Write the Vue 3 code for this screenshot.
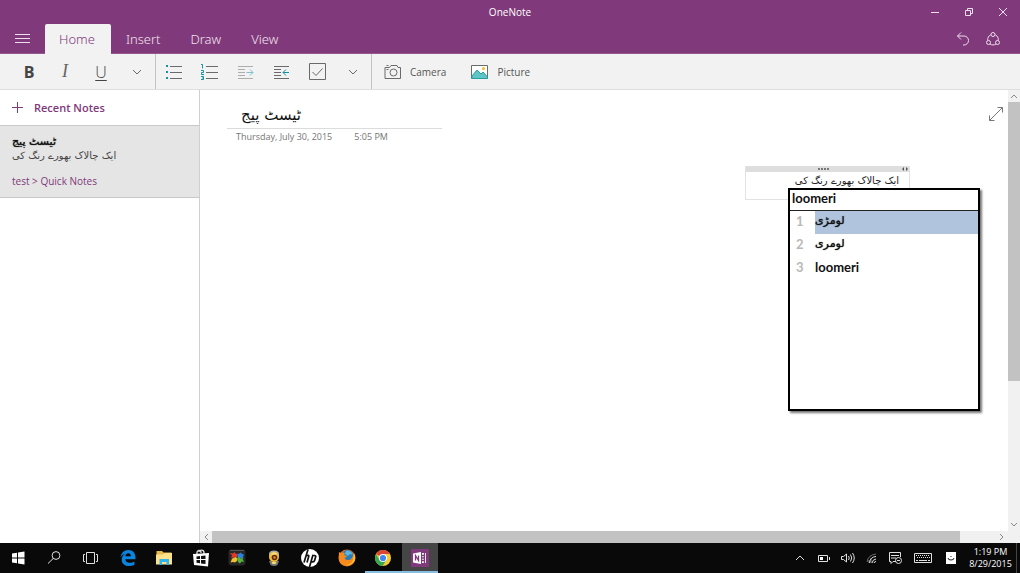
<script setup>
import { ref } from 'vue'

const tabs = ['Home', 'Insert', 'Draw', 'View']
const activeTab = ref('Home')
const candidates = ['لومڑی', 'لومری', 'loomeri']
const selected = ref(0)
const typed = ref('loomeri')
const title = ref('ٹیسٹ پیج')
</script>

<template>
  <div class="app">
    <header class="head">
      <div class="titlebar">
        <span class="app-name">OneNote</span>
        <div class="window-buttons">
          <button aria-label="Minimize"><svg width="10" height="10" viewBox="0 0 10 10"><path d="M1 5.5h8" /></svg></button>
          <button aria-label="Restore"><svg width="10" height="10" viewBox="0 0 10 10"><path d="M1.5 3.5h5v5h-5zM3.5 3.500v-2h5v5h-2" /></svg></button>
          <button aria-label="Close"><svg width="10" height="10" viewBox="0 0 10 10"><path d="M1 1l8 8M9 1l-8 8" /></svg></button>
        </div>
      </div>
      <div class="tabbar">
        <button class="menu" aria-label="Menu"><svg width="16" height="12" viewBox="0 0 16 12"><path d="M0 1.500h15M0 5.500h15M0 9.500h15" /></svg></button>
        <nav class="tabs">
          <button v-for="t in tabs" :key="t" class="tab" :class="{ active: t === activeTab }" @click="activeTab = t">{{ t }}</button>
        </nav>
        <div class="head-actions">
          <button aria-label="Undo"><svg width="16" height="16" viewBox="0 0 16 16"><path d="M6 1.500L2.500 5 6 8.500M2.500 5H9a4.500 4.500 0 0 1 0 9H8" /></svg></button>
          <button aria-label="Share"><svg width="16" height="16" viewBox="0 0 16 16"><circle cx="8" cy="3.500" r="2" /><circle cx="3.500" cy="11.500" r="2" /><circle cx="12.500" cy="11.500" r="2" /><path d="M5.800 3.800C3.500 4.800 2.400 7 2.800 9.400M10.200 3.800c2.300 1 3.400 3.200 3 5.600M5 13c1.800 1.300 4.200 1.300 6 0" /></svg></button>
        </div>
      </div>
    </header>

    <div class="toolbar">
      <div class="group first">
        <button class="tool bold" aria-label="Bold">B</button>
        <button class="tool italic" aria-label="Italic">I</button>
        <button class="tool under" aria-label="Underline">U</button>
        <button class="tool" aria-label="More text formats"><svg width="10" height="8" viewBox="0 0 10 8"><path class="g" d="M1 2l4 4 4-4" /></svg></button>
      </div>
      <div class="group">
        <button class="tool" aria-label="Bullets"><svg width="18" height="16" viewBox="0 0 18 16"><path class="g" d="M5 2.500h12M5 8.500h12M5 14.500h12" /><path class="tf" d="M1 1h2v2H1zM1 7h2v2H1zM1 13h2v2H1z" /></svg></button>
        <button class="tool" aria-label="Numbering"><svg width="18" height="16" viewBox="0 0 18 16"><path class="g" d="M5 2.500h12M5 8.500h12M5 14.500h12" /><path class="t" d="M0 .5h1.500v4M0 6.500h2.500v2H.5v2H3M0 12.500h2.500v3H0M1 14h1" /></svg></button>
        <button class="tool faded" aria-label="Increase indent"><svg width="18" height="16" viewBox="0 0 18 16"><path class="g" d="M1 2.500h15M1 5.500h7M1 8.500h7M1 11.500h7M1 14.500h15" /><path class="t" d="M9.500 8.500H16M13 5.500l3 3-3 3" /></svg></button>
        <button class="tool" aria-label="Decrease indent"><svg width="18" height="16" viewBox="0 0 18 16"><path class="g" d="M1 2.500h15M1 5.500h7M1 8.500h7M1 11.500h7M1 14.500h15" /><path class="t" d="M16 8.500h-6M13 5.500l-3 3 3 3" /></svg></button>
        <button class="tool" aria-label="To do tag"><svg width="18" height="18" viewBox="0 0 18 18"><path class="g" d="M.5.5h16v16H.5zM3.500 9l3.500 3.500L13.500 5.500" /></svg></button>
        <button class="tool last" aria-label="More paragraph formats"><svg width="10" height="8" viewBox="0 0 10 8"><path class="g" d="M1 2l4 4 4-4" /></svg></button>
      </div>
      <div class="inserts">
        <button class="insert"><svg width="18" height="16" viewBox="0 0 18 16"><path class="g" d="M1 3.500h4.500L7 1.500h6l1 2h2.500v11H1zM2.500 5.500h2M2.500 1.500h2" /><circle class="g" cx="9.500" cy="8.500" r="3.500" /></svg>Camera</button>
        <button class="insert"><svg width="18" height="16" viewBox="0 0 18 16"><path class="g" d="M.5 1.500h16v13H.5z" fill="#fff" /><path d="M1 12l5-6 4 4 2-2 4.500 5v1.500H1z" fill="#5fc4c4" stroke="#269ea2" /><circle cx="12.500" cy="4.500" r="1.500" fill="#f7b928" stroke="none" /></svg>Picture</button>
      </div>
    </div>

    <main class="main">
      <aside class="sidebar">
        <button class="recent"><svg width="12" height="12" viewBox="0 0 12 12"><path d="M5.500 0v11M0 5.500h11" /></svg>Recent Notes</button>
        <article class="note">
          <h2 lang="ur">ٹیسٹ پیج</h2>
          <p class="preview" lang="ur">ایک چالاک بھورے رنگ کی</p>
          <a href="#" class="path">test &gt; Quick Notes</a>
        </article>
      </aside>

      <section class="page">
        <div class="sheet">
          <div class="page-head">
            <input v-model="title" class="title" lang="ur" aria-label="Page title">
            <div class="date"><span>Thursday, July 30, 2015</span><span>5:05 PM</span></div>
          </div>
          <button class="expand" aria-label="Full screen"><svg width="16" height="16" viewBox="0 0 16 16"><path d="M1.500 14.500l13-13M9.500 1.500h5v5M1.500 9.500v5h5" /></svg></button>

          <div class="box">
            <div class="grip"><span class="dots"><i></i><i></i><i></i><i></i></span><svg width="8" height="4" viewBox="0 0 8 4"><path d="M3 0v4L1 2zM5 0v4l2-2z" /></svg></div>
            <p dir="rtl" lang="ur">ایک چالاک بھورے رنگ کی</p>
          </div>

          <div class="ime">
            <input v-model="typed" class="typed" aria-label="Typed text">
            <ol>
              <li v-for="(c, i) in candidates" :key="c" :class="{ on: i === selected }" @click="selected = i">
                <span class="num">{{ i + 1 }}</span><span class="word" :class="{ urdu: c !== typed }">{{ c }}</span>
              </li>
            </ol>
          </div>
        </div>
        <div class="vbar">
          <button aria-label="Scroll up"><svg width="8" height="6" viewBox="0 0 8 6"><path d="M1 5l3-3 3 3" /></svg></button>
          <div class="vtrack"><div class="vthumb"></div></div>
          <button aria-label="Scroll down"><svg width="8" height="6" viewBox="0 0 8 6"><path d="M1 1l3 3 3-3" /></svg></button>
        </div>
        <div class="hbar">
          <button aria-label="Scroll left"><svg width="6" height="8" viewBox="0 0 6 8"><path d="M5 1L2 4l3 3" /></svg></button>
          <div class="htrack"><div class="hthumb"></div></div>
          <button aria-label="Scroll right"><svg width="6" height="8" viewBox="0 0 6 8"><path d="M1 1l3 3-3 3" /></svg></button>
        </div>
      </section>
    </main>

    <footer class="taskbar">
      <div class="apps">
        <button aria-label="Start"><svg width="18" height="18" viewBox="0 0 18 18"><path fill="#fff" d="M3 4.500l5-.8v4.800H3zM9 3.500l6.500-1v6H9zM3 9.500h5v4.800l-5-.8zM9 9.500h6.500v6L9 14.500z" /></svg></button>
        <button aria-label="Search"><svg class="line" width="18" height="18" viewBox="0 0 18 18"><circle cx="10" cy="6.500" r="3.900" /><path d="M7.200 9.500L2 14.500" /></svg></button>
        <button aria-label="Task view"><svg class="line" width="18" height="18" viewBox="0 0 18 18"><path d="M4.500 3.500h8v11h-8zM3 5.500H1.500v7H3M14 5.500h1.500v7H14" /></svg></button>
        <button aria-label="Edge"><svg width="18" height="18" viewBox="0 0 18 18"><path fill="#0a84dc" d="M1.500 8.500C2 4 5 1 9.300 1c4.600 0 7.200 3.200 7.200 7.200v2.100H6.300c.1 2.400 2.100 3.500 4.500 3.500 1.700 0 3.300-.5 4.600-1.300v3.600c-1.600.7-3.400 1-5.200 1-4.700 0-7.500-2.700-7.500-6.400 0-2.500 1.300-4.700 3.700-5.900-2.300.5-3.900 1.700-4.900 3.700zM6.400 7.200h5.500c0-1.900-1-3-2.600-3-1.600 0-2.700 1.200-2.900 3z" /></svg></button>
        <button aria-label="File Explorer"><svg width="18" height="18" viewBox="0 0 18 18"><path fill="#e8b84a" d="M1.500 2H7l1.500 1.500h8V15h-15z" /><path fill="#ffe08a" d="M1 5.500h7L9.500 4H17v11.500H1z" /><path fill="#2cb5ee" d="M4.500 16v-6h9.500v6h-2.500v-3H7v3z" /></svg></button>
        <button aria-label="Store"><svg width="18" height="18" viewBox="0 0 18 18"><path fill="none" stroke="#ddd" stroke-width="1.300" d="M5 5V3.500a2 2 0 0 1 4 0V4M7 3c0-2.500 5-2.500 5 .5V5" /><path fill="#fff" d="M1 5l16-1-1 13.500L2 16z" /><path fill="#111" d="M4.500 7.500l3.500-.4v3H4.500zM9 7l4.500-.5v3.600H9zM4.500 11H8v3.200l-3.500-.4zM9 11h4.500v3.900L9 14.400z" /></svg></button>
        <button aria-label="Puzzle"><svg width="18" height="18" viewBox="0 0 18 18"><rect x=".5" y=".5" width="17" height="16" rx="3" fill="#262626" /><path fill="#555" d="M2 1h14v1H2z" /><path fill="#e0392a" d="M2 4l3 .5L6.500 3 8 5l1.500-.5-.5 3-2 2-2-1-2 .5 1-2.500z" /><path fill="#2d83d9" d="M9.500 5l2-.5 1.500-1 1 1.500 2 .5-1 2 .5 2-3-.5-1 1-2-2z" /><path fill="#efc02e" d="M4 9.500l2-.5 2-1 1.500 2L9 12l-2 1.500-2-.5-2.500.5L3.500 11z" /><path fill="#57b33d" d="M9 9l2-1 1.500 1.500 2-.5.5 2 1 2-2.500-.5-1.500 2L10 13z" /></svg></button>
        <button aria-label="Messenger"><svg width="18" height="18" viewBox="0 0 18 18"><path fill="#777" d="M4 12h10l-1.500 4q-3.500 2-7 0z" /><path fill="#aaa" d="M4 5q0-3.500 5-3.500T14 5v3H4z" /><circle cx="9" cy="8" r="5" fill="#f2bd35" /><path fill="#f8dc80" d="M5.500 5Q9 1.500 12.500 5L9 6z" /><circle cx="9.500" cy="8.500" r="2.800" fill="#5d2a0e" /><circle cx="9.500" cy="8.500" r="1.200" fill="#e98b20" /><path fill="#f5dc73" d="M6.500 13.500q2.500-1.500 5 0l-1 1.500h-3z" /></svg></button>
        <button aria-label="HP"><svg width="18" height="18" viewBox="0 0 18 18"><circle cx="9" cy="9" r="9" fill="#fff" /><path fill="none" stroke="#111" stroke-width="1.700" d="M7 .5L3 13.500M4.700 7.200Q8.500 5 7.600 8L6 13.500M12 5.800L8.500 18M11.800 6.500h1.800q1.500 0 1 1.500l-1 3.500q-.4 1.400-1.800 1.400h-1.700" /></svg></button>
        <button aria-label="Firefox"><svg width="18" height="18" viewBox="0 0 18 18"><circle cx="9" cy="9" r="8.500" fill="#e46b1c" /><circle cx="9.500" cy="7" r="6" fill="#287bb9" /><path fill="#5bb6df" d="M8 2q5-1 7 4l-3-1-2 2-3-2z" /><path fill="#f58a1f" d="M1 3l2 1q2-1 4 0L6 6l3 1-1 1.500H6.500q.5 3 4 2.500 3.500 0 5-6 2 4-.5 8t-7 4Q0 16 .8 7z" /><path fill="#fbc02d" d="M16 4q3 6-1 10-3 3-7 2 6-1 7-5z" /></svg></button>
        <button aria-label="Chrome" class="open"><svg width="18" height="18" viewBox="0 0 18 18"><circle cx="9" cy="9" r="8" fill="#f7cb32" /><path fill="#db4437" d="M9 9L2.100 5A8 8 0 0 1 15.900 5H9z" /><path fill="#36a852" d="M2.100 5A8 8 0 0 0 8.500 17l4-6L9 9l-3.500 2z" /><circle cx="9" cy="9" r="4" fill="#fff" /><circle cx="9" cy="9" r="3.100" fill="#4285f4" /></svg></button>
        <button aria-label="OneNote" class="open current"><svg width="18" height="18" viewBox="0 0 18 18"><path fill="#80397b" d="M0 0h18v18H0z" /><path fill="#fff" d="M2 4.500l8-1.500v12L2 13.500zM11 4h4v10h-4z" /><path fill="none" stroke="#80397b" stroke-width="1.300" d="M4.500 11.500v-5l3 5v-5M11 6.500h2M11 9h2M11 11.500h2M13.500 4v10" /></svg></button>
      </div>
      <div class="tray">
        <button aria-label="Hidden icons"><svg class="line" width="12" height="12" viewBox="0 0 12 12"><path d="M2 8l4-4 4 4" /></svg></button>
        <button aria-label="Battery"><svg class="line" width="12" height="12" viewBox="0 0 12 12"><path d="M.5 3.500h9v6h-9zM11.500 5v3" /><path fill="#fff" stroke="none" d="M2 5h3v3H2z" /></svg></button>
        <button aria-label="Volume"><svg class="line" width="14" height="12" viewBox="0 0 14 12"><path d="M.5 4.500h2L5.500 2v8l-3-2.500h-2zM7.500 4q1.500 2 0 4M9.500 2.500q2.500 3.500 0 7M11.500 1q3.500 5 0 10" /></svg></button>
        <button aria-label="Network"><svg class="line" width="12" height="12" viewBox="0 0 12 12"><path d="M1 10Q2 3 10 2" opacity=".45" /><path d="M3.500 11Q4 5 10 4.500M6 11Q6.500 7.500 10 7M8 11q.5-1.500 2-1.500" /><path d="M3 8v3M5 6v5" opacity=".5" /></svg></button>
        <button aria-label="Notifications"><svg class="line" width="14" height="12" viewBox="0 0 14 12"><path d="M7 9.500H4l-2 2v-2H.5V.5h11V5M2 3.500h8M2 6h5" /><circle cx="9.500" cy="8.500" r="3" /><path d="M8 8.500h3" /></svg></button>
        <button class="wide" aria-label="Keyboard"><svg class="line" width="18" height="12" viewBox="0 0 18 12"><path d="M.5 1.500h17v9H.5z" /><path stroke-dasharray="1 1" d="M2 3.500h14M3 5.500h13" /><path d="M2 8.500h2M5 8.500h8M14 8.500h2" /></svg></button>
        <button class="lang" aria-label="Input language"><svg width="12" height="12" viewBox="0 0 12 12"><path fill="#fff" d="M1 0h10v12H1z" /><path fill="none" stroke="#222" d="M3 6q0 2 3 2t3-2M5.500 4.500h1" /></svg></button>
        <div class="clock"><span>1:19 PM</span><span>8/29/2015</span></div>
      </div>
    </footer>
  </div>
</template>

<style>
body { margin: 0; }
</style>

<style scoped>
.app {
  height: 100vh;
  display: flex;
  flex-direction: column;
  overflow: hidden;
  background: #fff;
  color: #444;
  font-family: "Open Sans", "Noto Sans", "DejaVu Sans", sans-serif;
  font-size: 11px;
}
.app * { box-sizing: border-box; }
button, input { font: inherit; color: inherit; background: none; border: 0; padding: 0; margin: 0; outline: 0; }
button { display: flex; align-items: center; justify-content: center; flex: none; }
svg { display: block; flex: none; }
p, h2, ol { margin: 0; padding: 0; }

.head { background: #80397b; color: #fff; border-bottom: 1px solid #94588f; }
.head svg { fill: none; stroke: #eddfec; }
.titlebar { height: 24px; display: grid; grid-template-columns: 1fr auto 1fr; align-items: center; }
.app-name { grid-column: 2; font-size: 10px; }
.window-buttons { display: flex; justify-content: flex-end; }
.window-buttons button { width: 34px; height: 24px; }
.tabbar { height: 29px; display: flex; }
.menu { width: 45px; }
.tabs { display: flex; flex: 1; }
.tab { padding: 0 15px; font-family: "Noto Sans", sans-serif; font-size: 13px; font-weight: 300; color: #f0e4ef; }
.tab.active { padding: 0 16px 0 14px; height: 30px; background: #f2f2f2; color: #80397b; border-radius: 2px 2px 0 0; }
.head-actions { display: flex; padding-right: 12px; }
.head-actions button { width: 30px; }

.toolbar { height: 36px; flex: none; display: flex; background: #f2f2f2; border-bottom: 1px solid #dedede; }
.toolbar svg { fill: none; }
.g { stroke: #6a6a6a; }
.t { stroke: #1591a5; }
.tf { fill: #1591a5; }
.group { display: flex; border-right: 1px solid #c3c3c3; }
.first { padding-left: 11px; }
.tool { width: 36px; }
.last { width: 35px; padding-right: 2px; }
.faded { opacity: .5; }
.bold { font-size: 16px; font-weight: 700; }
.italic { font-family: "Liberation Serif", serif; font-size: 18px; font-style: italic; color: #666; }
.under { font-size: 16px; font-weight: 300; text-decoration: underline; text-underline-offset: 2px; }
.inserts { display: flex; gap: 25px; padding-left: 12px; }
.insert { gap: 8px; color: #555; font-size: 10px; }

.main { flex: 1; min-height: 0; display: flex; }
.sidebar { width: 200px; flex: none; border-right: 1px solid #cfcfcf; }
.recent { width: 100%; height: 36px; justify-content: flex-start; gap: 10px; padding-left: 12px; border-bottom: 1px solid #c8c8c8; color: #80397b; font-weight: 600; }
.recent svg { stroke: #80397b; }
.note { height: 72px; padding: 8px 12px; background: #e5e5e5; border-bottom: 1px solid #c8c8c8; }
.note h2 { color: #111; font-family: "DejaVu Sans", sans-serif; font-size: 11px; font-weight: 400; line-height: 16px; text-shadow: 0 0 1px #111; }
.preview { font-family: "DejaVu Sans", sans-serif; font-size: 10px; line-height: 12px; white-space: nowrap; }
.path { display: block; margin-top: 10px; line-height: 18px; font-size: 10px; color: #80397b; text-decoration: none; }

.page { flex: 1; min-width: 0; display: grid; grid-template: 1fr 12px / 1fr 12px; }
.sheet { position: relative; display: flex; justify-content: space-between; align-items: flex-start; padding: 12px 4px 0 27px; }
.page-head { width: 215px; }
.title { width: 100%; height: 27px; padding: 0 14px; border-bottom: 1px solid #dcdcdc; color: #111; font-family: "DejaVu Sans", sans-serif; font-size: 15px; }
.date { display: flex; gap: 22px; padding-left: 9px; font-size: 9px; line-height: 16px; color: #757575; }
.expand { width: 16px; height: 24px; }
.expand svg { fill: none; stroke: #777; }

.box { position: absolute; right: 98px; top: 76px; width: 165px; height: 34px; border: 1px solid #e2e2e2; border-top: 0; }
.grip { height: 6px; display: flex; justify-content: flex-end; align-items: center; background: #dedede; }
.grip svg { fill: #555; }
.dots { flex: 1; display: flex; justify-content: center; gap: 1px; }
.dots i { width: 2px; height: 2px; background: #777; }
.box p { padding: 0 10px; color: #222; font-family: "DejaVu Sans", sans-serif; font-size: 10px; line-height: 18px; white-space: nowrap; }

.ime { position: absolute; right: 28px; top: 98px; width: 192px; height: 223px; background: #fff; border: 2px solid #000; box-shadow: 2px 2px 2px #777; color: #111; font-family: Lato, "DejaVu Sans", sans-serif; font-size: 13px; font-weight: 700; }
.typed { display: block; width: 100%; height: 21px; padding: 0 2px 4px; border-bottom: 1px solid #222; }
ol { list-style: none; }
li { display: flex; height: 23px; line-height: 20px; }
.num { width: 25px; padding-left: 6px; color: #b8b8b8; }
.word { flex: 1; }
.urdu { font-family: "DejaVu Sans", sans-serif; font-size: 11px; font-weight: 400; text-shadow: 0 0 1px #111; }
.on .word { background: #b0c4de; }

.vbar, .hbar { display: flex; background: #f1f1f1; }
.vbar { flex-direction: column; }
.hbar { grid-column: 1 / 3; grid-row: 2; padding-right: 12px; }
.vbar button, .hbar button { width: 12px; height: 12px; }
.vbar svg, .hbar svg { fill: none; stroke: #888; }
.vtrack { flex: 1; }
.htrack { flex: 1; display: grid; grid-template-columns: 187fr 9fr; }
.vthumb { height: 67%; background: #c2c2c2; }
.hthumb { background: #c2c2c2; }

.taskbar { height: 30px; flex: none; display: flex; justify-content: space-between; background: #090909; color: #fff; }
.apps { width: 438px; display: flex; }
.apps button { flex: 1; }
.apps .open { border-bottom: 2px solid #86bde0; padding-top: 2px; }
.apps .current { background: #454545; }
.line { fill: none; stroke: #e0e0e0; }
.tray { display: flex; padding-right: 3px; }
.tray button { width: 24px; }
.tray .wide { width: 29px; }
.tray .lang { width: 28px; }
.clock { width: 52px; display: flex; flex-direction: column; justify-content: center; text-align: center; font-size: 9px; line-height: 12px; border-right: 1px solid #444; }
</style>
